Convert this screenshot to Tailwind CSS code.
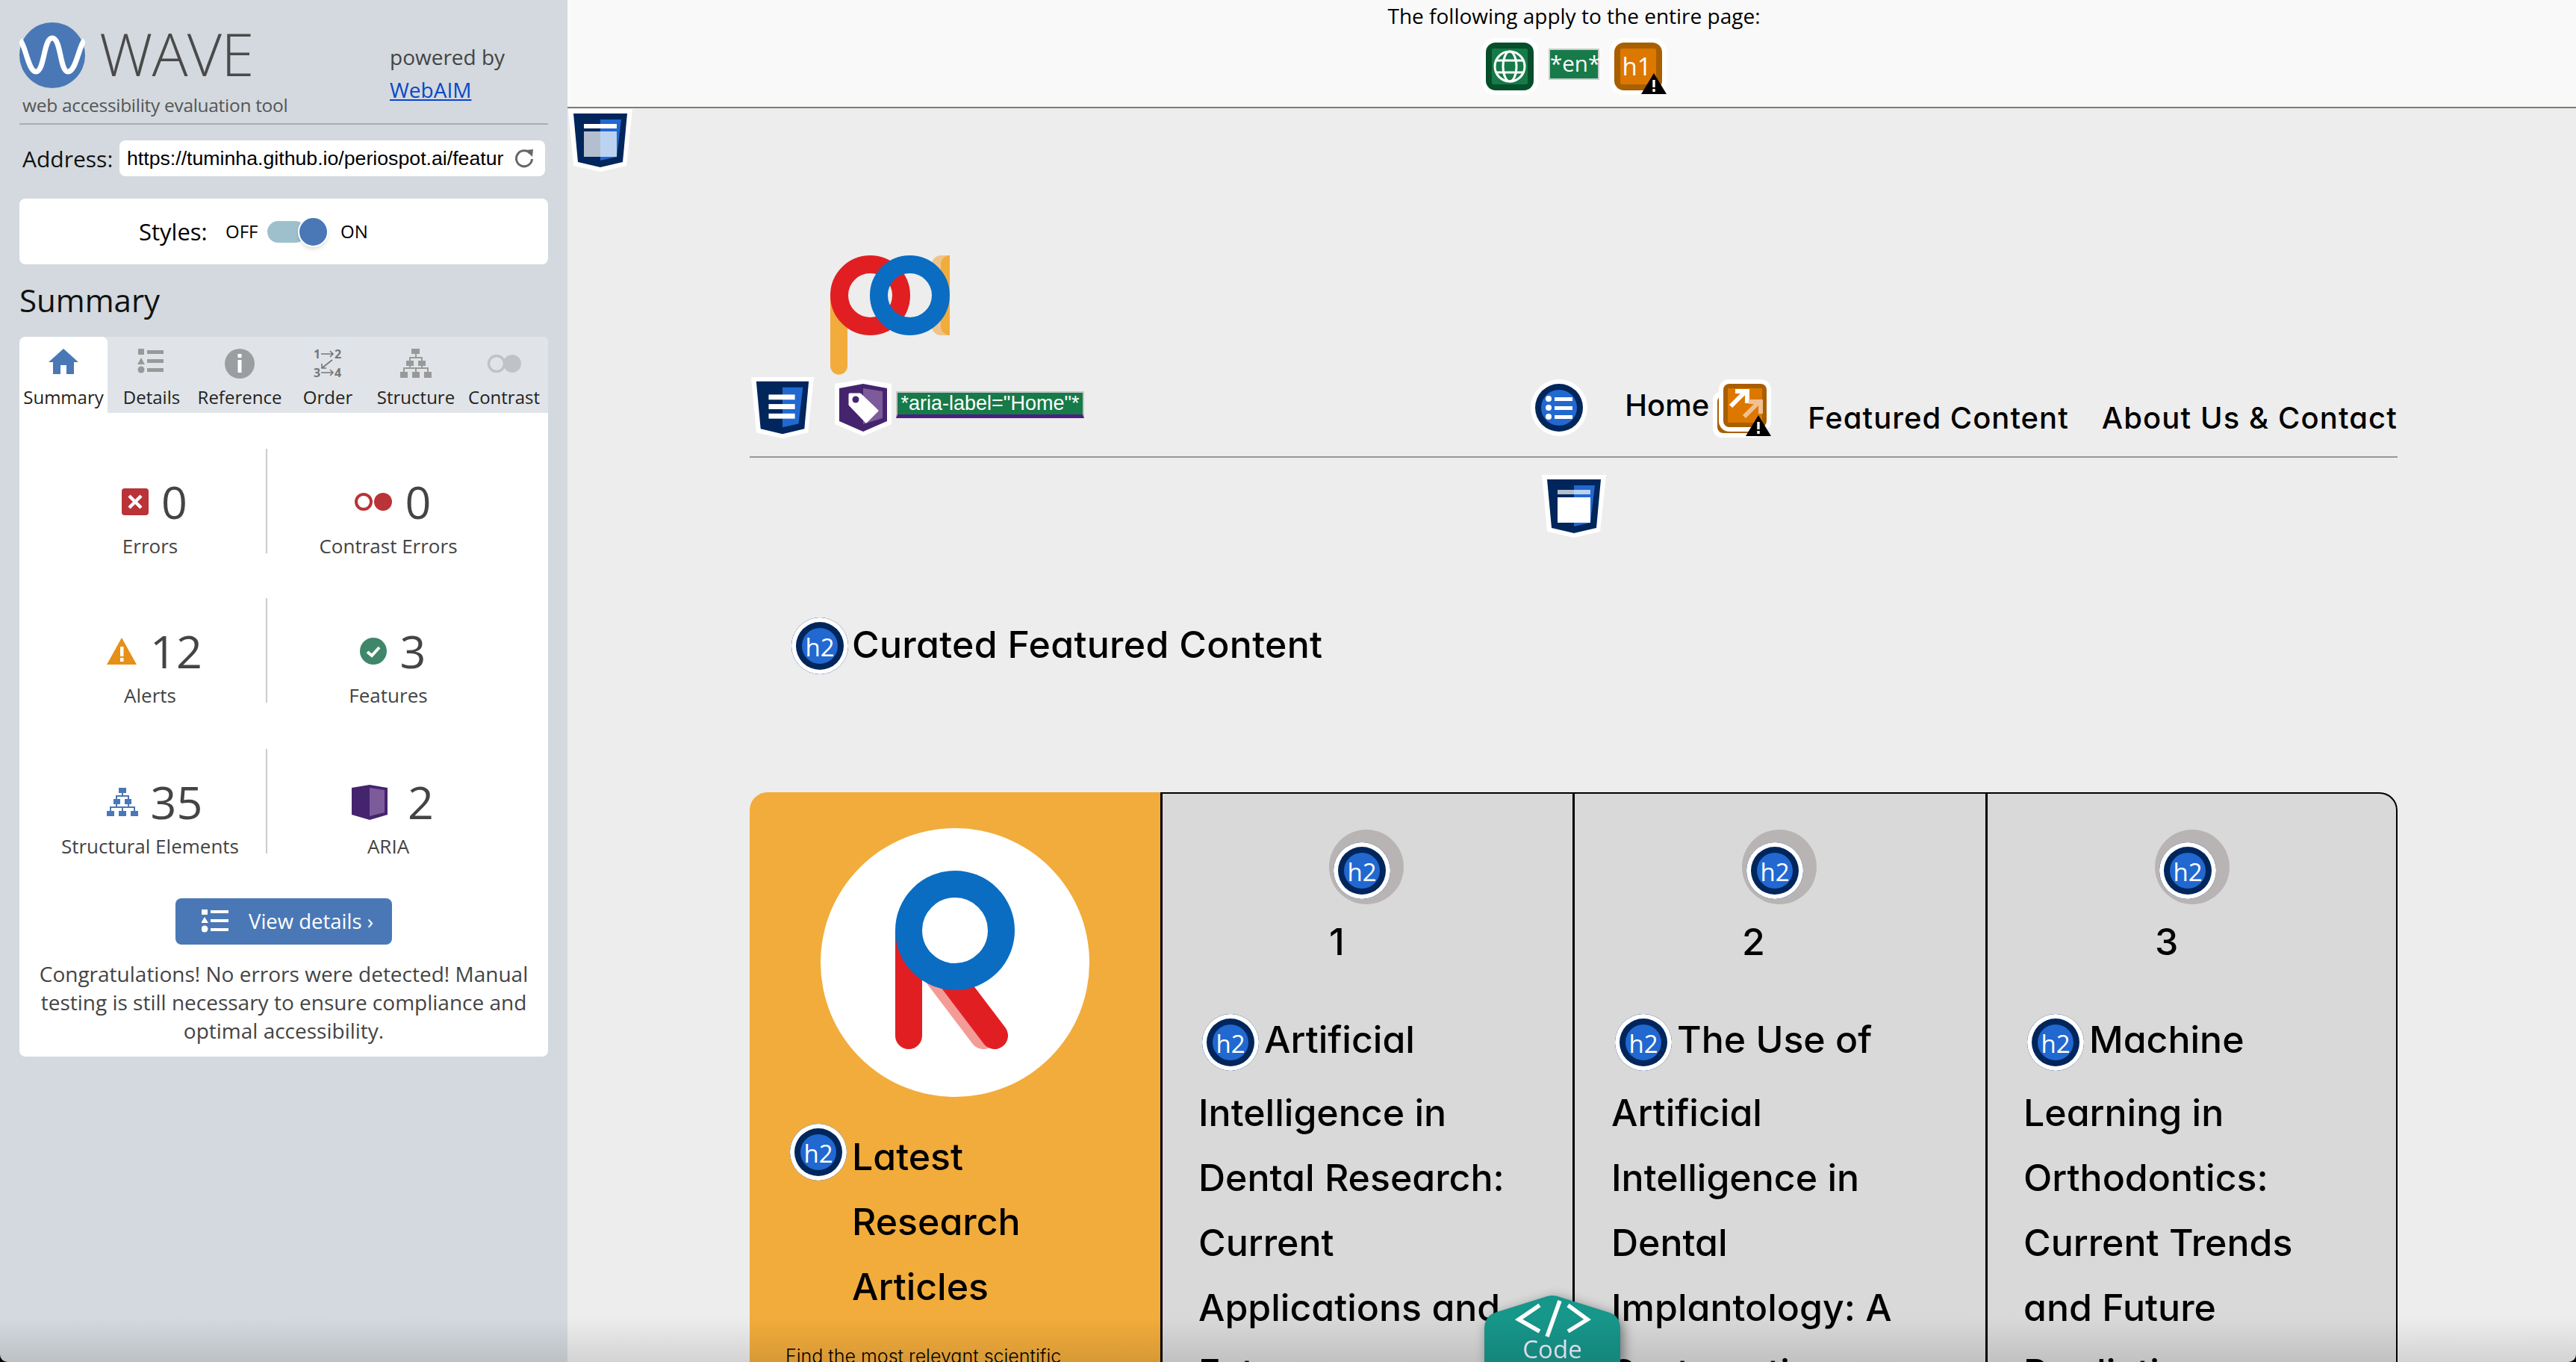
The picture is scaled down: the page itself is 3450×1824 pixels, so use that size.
<!DOCTYPE html>
<html lang="en">
<head>
    <meta charset="UTF-8">
    <meta name="viewport" content="width=device-width, initial-scale=1.0">
    <title>WAVE report</title>
    <script src="https://cdn.jsdelivr.net/npm/@tailwindcss/browser@4"></script>
</head>
<body class="bg-black w-[3450px] h-[1824px] overflow-hidden">
    <!-- shared icons -->
    <svg class="hidden">
        <symbol id="shield" viewBox="0 0 86 84">
            <polygon points="0,0 86,0 78,76 43,84 7,76" fill="#fff"/>
            <polygon points="7,6 79,6 73,71 43,78 13,71" fill="#01265c"/>
            <polygon points="43,14 71,14 65,64 43,69" fill="#2168d0"/>
        </symbol>
        <symbol id="warn" viewBox="0 0 34 28">
            <polygon points="17,0 34,28 0,28" fill="#000"/><rect x="15.3" y="9" width="3.4" height="10" fill="#fff"/><rect x="15.3" y="21" width="3.4" height="4" fill="#fff"/>
        </symbol>
    </svg>

    <div class="relative flex w-full h-full overflow-hidden rounded-b-[10px] font-['Open_Sans',sans-serif]">
        <!-- WAVE sidebar -->
        <aside class="w-[760px] h-full shrink-0 bg-[#d3d9de] px-[26px]">
            <div class="relative h-[167px] border-b-2 border-[#a9aeb2]">
                <div class="flex items-start pt-[30px]">
                    <svg class="w-[88px] h-[88px]" viewBox="0 0 88 88"><circle cx="44" cy="44" r="44" fill="#4a78b6"/><path d="M1 24C8 30 12 66 22 66C34 66 32 21 44 21C56 21 54 66 65 66C76 66 80 30 87 24" fill="none" stroke="#fff" stroke-width="7"/></svg>
                    <div class="ml-[19px] mt-[-3px] text-[80px] leading-[88px] font-light text-[#4a4a4a] tracking-[-0.8px]">WAVE</div>
                    <div class="absolute left-[496px] top-[54px] text-[28px] leading-[44px] text-[#444]">
                        <div>powered by</div>
                        <a class="text-[#0a48c8] underline">WebAIM</a>
                    </div>
                </div>
                <div class="ml-[4px] mt-[5px] text-[24.5px] leading-[36px] text-[#555] tracking-[-0.3px]">web accessibility evaluation tool</div>
            </div>

            <div class="flex items-center mt-[21px] pl-[4px]">
                <span class="text-[30px] text-[#111] w-[130px]">Address:</span>
                <div class="flex items-center justify-between w-[570px] h-[48px] rounded-lg bg-white pl-[10px] pr-[15px]">
                    <span class="font-['Liberation_Sans',sans-serif] text-[26.7px] text-black whitespace-nowrap">https://tuminha.github.io/periospot.ai/featur</span>
                    <svg class="w-[26px] h-[26px]" viewBox="0 0 26 26" fill="none"><path d="M21 6.5A10.5 10.5 0 1 0 23.5 14" stroke="#666" stroke-width="3"/><polygon points="15,2 25,1 24,11" fill="#666"/></svg>
                </div>
            </div>

            <div class="flex items-center mt-[30px] h-[88px] rounded-lg bg-white pl-[160px] text-black">
                <span class="text-[31px] w-[116px]">Styles:</span>
                <span class="text-[24px] w-[56px]">OFF</span>
                <div class="relative w-[82px] h-[29px]">
                    <div class="w-[52px] h-[29px] rounded-full bg-[#9dc0cc]"></div>
                    <div class="absolute left-[41px] top-[-6px] w-[41px] h-[41px] rounded-full bg-[#4a78b6] border-2 border-white shadow-md"></div>
                </div>
                <span class="text-[24px] ml-[16px]">ON</span>
            </div>

            <h2 class="mt-[18px] text-[42px] leading-[60px] text-[#111]">Summary</h2>

            <div class="mt-[19px] h-[964px] rounded-lg bg-white overflow-hidden">
                <!-- tabs -->
                <div class="grid grid-cols-6 h-[102px] bg-[#e0e4e8] text-[24px] text-[#222] text-center">
                    <div class="bg-white rounded-t-lg pt-[16px]">
                        <svg class="mx-auto w-[40px] h-[40px]" viewBox="0 0 40 40"><path d="M20 0L40 18H34V34H24V22H16V34H6V18H0Z" fill="#4a78b6"/></svg>
                        <div class="mt-[5px] leading-[40px]">Summary</div>
                    </div>
                    <div class="pt-[16px]">
                        <svg class="mx-auto w-[40px] h-[40px]" viewBox="0 0 40 40" fill="#999"><rect x="2" y="0" width="8" height="8"/><polygon points="6,12 11,21 1,21"/><circle cx="6" cy="28" r="4.5"/><rect x="14" y="2" width="22" height="5"/><rect x="14" y="14" width="22" height="5"/><rect x="14" y="26" width="22" height="5"/></svg>
                        <div class="mt-[5px] leading-[40px]">Details</div>
                    </div>
                    <div class="pt-[16px]">
                        <svg class="mx-auto w-[40px] h-[40px]" viewBox="0 0 40 40"><circle cx="20" cy="20" r="20" fill="#9a9ea0"/><rect x="17.5" y="7" width="5" height="5" fill="#fff"/><rect x="17.5" y="15" width="5" height="17" fill="#fff"/></svg>
                        <div class="mt-[5px] leading-[40px]">Reference</div>
                    </div>
                    <div class="pt-[16px]">
                        <svg class="mx-auto w-[40px] h-[40px]" viewBox="0 0 40 40" fill="none" stroke="#777" stroke-width="1.6">
                            <text x="1" y="13" font-family="Open Sans" font-weight="700" font-size="16" fill="#777" stroke="none">1</text><text x="29" y="13" font-family="Open Sans" font-weight="700" font-size="16" fill="#777" stroke="none">2</text>
                            <text x="1" y="38" font-family="Open Sans" font-weight="700" font-size="16" fill="#777" stroke="none">3</text><text x="29" y="38" font-family="Open Sans" font-weight="700" font-size="16" fill="#777" stroke="none">4</text>
                            <path d="M11 7H27M23 3L27 7L23 11M11 32H27M23 28L27 32L23 36M26 15L12 26M12 20V26H18"/>
                        </svg>
                        <div class="mt-[5px] leading-[40px]">Order</div>
                    </div>
                    <div class="pt-[16px]">
                        <svg class="mx-auto w-[42px] h-[40px]" viewBox="0 0 42 40"><g fill="#999"><rect x="15" y="0" width="11" height="7"/><rect x="8" y="16" width="10" height="7"/><rect x="24" y="16" width="10" height="7"/><rect x="0" y="31" width="10" height="8"/><rect x="16" y="31" width="10" height="8"/><rect x="32" y="31" width="10" height="8"/></g><path d="M21 7V12M13 16V12H29V16M21 26H5V31M21 26V31M21 26H37V31M13 23V26M29 23V26" stroke="#999" stroke-width="2" fill="none"/></svg>
                        <div class="mt-[5px] leading-[40px]">Structure</div>
                    </div>
                    <div class="pt-[16px]">
                        <svg class="mx-auto w-[50px] h-[40px]" viewBox="0 0 50 40"><circle cx="15" cy="20" r="10.5" fill="none" stroke="#c0c3c6" stroke-width="3.5"/><circle cx="36" cy="20" r="12" fill="#c0c3c6"/></svg>
                        <div class="mt-[5px] leading-[40px]">Contrast</div>
                    </div>
                </div>

                <!-- counts -->
                <div class="mt-[48px] text-[#444]">
                    <div class="flex h-[140px]">
                        <div class="w-[332px] pl-[20px] pt-[35px] text-center border-r-2 border-[#ccc]">
                            <div class="flex items-center justify-center gap-[17px] h-[72px] pl-[12px] text-[61px]">
                                <svg class="w-[36px] h-[36px]" viewBox="0 0 36 36"><rect width="36" height="36" rx="4" fill="#b93338"/><path d="M10 10L26 26M26 10L10 26" stroke="#fff" stroke-width="4.5"/></svg>
                                <span>0</span>
                            </div>
                            <div class="mt-[5px] text-[26px] leading-[36px]">Errors</div>
                        </div>
                        <div class="w-[324px] pt-[35px] text-center">
                            <div class="flex items-center justify-center gap-[18px] h-[72px] pl-[12px] text-[61px]">
                                <svg class="w-[50px] h-[24px]" viewBox="0 0 50 24"><circle cx="12" cy="12" r="10" fill="none" stroke="#b93338" stroke-width="4"/><circle cx="38" cy="12" r="12" fill="#b93338"/></svg>
                                <span>0</span>
                            </div>
                            <div class="mt-[5px] text-[26px] leading-[36px]">Contrast Errors</div>
                        </div>
                    </div>
                    <div class="flex h-[140px] mt-[60px]">
                        <div class="w-[332px] pl-[20px] pt-[35px] text-center border-r-2 border-[#ccc]">
                            <div class="flex items-center justify-center gap-[18px] h-[72px] pl-[12px] text-[61px]">
                                <svg class="w-[40px] h-[36px]" viewBox="0 0 40 36"><polygon points="20,0 40,36 0,36" fill="#e69017"/><rect x="18" y="12" width="4.5" height="13" fill="#fff"/><rect x="18" y="27" width="4.5" height="5" fill="#fff"/></svg>
                                <span>12</span>
                            </div>
                            <div class="mt-[5px] text-[26px] leading-[36px]">Alerts</div>
                        </div>
                        <div class="w-[324px] pt-[35px] text-center">
                            <div class="flex items-center justify-center gap-[18px] h-[72px] pl-[12px] text-[61px]">
                                <svg class="w-[36px] h-[36px]" viewBox="0 0 36 36"><circle cx="18" cy="18" r="18" fill="#40866a"/><path d="M10 19L16 24L26 13" fill="none" stroke="#fff" stroke-width="4"/></svg>
                                <span>3</span>
                            </div>
                            <div class="mt-[5px] text-[26px] leading-[36px]">Features</div>
                        </div>
                    </div>
                    <div class="flex h-[140px] mt-[62px]">
                        <div class="w-[332px] pl-[20px] pt-[35px] text-center border-r-2 border-[#ccc]">
                            <div class="flex items-center justify-center gap-[17px] h-[72px] pl-[12px] text-[61px]">
                                <svg class="w-[42px] h-[38px]" viewBox="0 0 42 38"><g fill="#4a78b6"><rect x="16" y="0" width="10" height="7"/><rect x="9" y="15" width="9" height="7"/><rect x="24" y="15" width="9" height="7"/><rect x="0" y="31" width="10" height="7"/><rect x="16" y="31" width="10" height="7"/><rect x="32" y="31" width="10" height="7"/></g><path d="M21 7V11M13 15V11H29V15M13 22V26M29 22V26M5 31V26H37V31M21 26V31" stroke="#4a78b6" stroke-width="2" fill="none"/></svg>
                                <span>35</span>
                            </div>
                            <div class="mt-[5px] text-[26px] leading-[36px]">Structural Elements</div>
                        </div>
                        <div class="w-[324px] pt-[35px] text-center">
                            <div class="flex items-center justify-center gap-[27px] h-[72px] pl-[12px] text-[61px]">
                                <svg class="w-[48px] h-[47px]" viewBox="0 0 48 47"><polygon points="0,4 24,0 48,4 48,40 24,47 0,40" fill="#45246e"/><polygon points="24,4 44,7 44,37 24,42" fill="#7d5b9b"/></svg>
                                <span>2</span>
                            </div>
                            <div class="mt-[5px] text-[26px] leading-[36px]">ARIA</div>
                        </div>
                    </div>
                </div>

                <div class="flex items-center w-[290px] h-[62px] mx-auto mt-[60px] rounded-lg bg-[#4a78b6] pl-[35px] text-white text-[27.5px]">
                    <svg class="w-[36px] h-[32px]" viewBox="0 0 36 32" fill="#fff"><rect x="0" y="0" width="8" height="7"/><polygon points="4,10 9,18 -1,18"/><circle cx="4" cy="26" r="4.5"/><rect x="12" y="1" width="24" height="4"/><rect x="12" y="13" width="24" height="4"/><rect x="12" y="25" width="24" height="4"/></svg>
                    <span class="ml-[27px]">View details ›</span>
                </div>
                <p class="mt-[20px] px-[20px] text-center text-[28px] leading-[38px] text-[#444]">Congratulations! No errors were detected! Manual testing is still necessary to ensure compliance and optimal accessibility.</p>
            </div>
        </aside>

        <!-- page under test -->
        <main class="flex-1 min-w-0 h-full bg-[#ededed] text-black font-['Inter',sans-serif] [font-feature-settings:'cv11']">
            <div class="h-[145px] bg-[#f9f9f9] border-b-2 border-[#7a8070] pl-[6px] font-['Open_Sans',sans-serif] [font-feature-settings:normal] text-center">
                <div class="text-[28px] leading-[42px]">The following apply to the entire page:</div>
                <div class="flex justify-center items-start gap-[14px] mt-[9px]">
                    <svg class="w-[76px] h-[76px]" viewBox="0 0 76 76">
                        <rect width="76" height="76" rx="18" fill="#fff"/><rect x="6" y="6" width="64" height="64" rx="13" fill="#054f2a"/><rect x="14" y="14" width="48" height="48" rx="2" fill="#177a49"/>
                        <g fill="none" stroke="#fff" stroke-width="3"><circle cx="38" cy="38" r="20"/><ellipse cx="38" cy="38" rx="9" ry="20"/><path d="M20 30H56M20 46H56"/></g>
                    </svg>
                    <div class="mt-[14px] w-[68px] h-[42px] border-2 border-[#ccc] bg-[#177a49] text-white text-[29.5px] leading-[36px]">*en*</div>
                    <div class="relative w-[76px] h-[76px]">
                        <svg class="w-[76px] h-[76px]" viewBox="0 0 76 76">
                            <rect width="76" height="76" rx="18" fill="#fff"/><rect x="6" y="6" width="64" height="64" rx="13" fill="#a85f00"/><rect x="14" y="14" width="48" height="48" rx="2" fill="#dc7700"/>
                            <text x="36" y="50" text-anchor="middle" font-family="Open Sans" font-size="33" fill="#fff">h1</text>
                        </svg>
                        <svg class="absolute left-[42px] top-[47px] w-[34px] h-[28px]"><use href="#warn"/></svg>
                    </div>
                </div>
            </div>

            <svg class="ml-[1px] mt-[1px] w-[86px] h-[84px]" viewBox="0 0 86 84">
                <use href="#shield"/><rect x="21" y="20" width="44" height="6" fill="#fff"/><rect x="21" y="30" width="44" height="34" fill="#fff" opacity=".7"/>
            </svg>

            <div class="ml-[244px] w-[2207px]">
                <!-- logo -->
                <svg class="ml-[108px] mt-[112px] w-[160px] h-[160px]" viewBox="0 0 160 160">
                    <path d="M160 0V107H148A12 12 0 0 1 136 95V12A12 12 0 0 1 148 0Z" fill="#eec48c"/>
                    <path d="M160 0V107A12 12 0 0 1 148 95V12A12 12 0 0 1 160 0Z" fill="#f2ac3b"/>
                    <path d="M0 50H23V148A11.5 11.5 0 0 1 0 148Z" fill="#f2ac3b"/>
                    <circle cx="53.5" cy="53.5" r="41.5" fill="none" stroke="#e11f22" stroke-width="24"/>
                    <circle cx="106.5" cy="53.5" r="41.5" fill="none" stroke="#0a6dc2" stroke-width="24"/>
                </svg>

                <!-- nav -->
                <div class="flex items-start h-[109px] mt-[2px] border-b-2 border-[#999] pl-[2px]">
                    <svg class="w-[84px] h-[84px]" viewBox="0 0 86 84">
                        <use href="#shield"/><rect x="24" y="24" width="36" height="7" fill="#fff"/><rect x="24" y="37" width="36" height="7" fill="#fff"/><rect x="24" y="50" width="36" height="7" fill="#fff"/>
                    </svg>
                    <svg class="ml-[28px] mt-[4px] w-[76px] h-[76px]" viewBox="0 0 76 76">
                        <polygon points="0,6 38,0 76,6 76,60 38,76 0,60" fill="#fff"/><polygon points="6,12 38,6 70,12 70,56 38,70 6,56" fill="#45246e"/><polygon points="38,12 64,16 64,52 38,60" fill="#7d5b9b"/>
                        <path d="M20 20H34L57 42L42 57L20 34Z" fill="#fff" stroke="#fff" stroke-width="3" stroke-linejoin="round"/><circle cx="28" cy="27" r="4.5" fill="#45246e"/>
                    </svg>
                    <div class="ml-[6px] mt-[20px] w-[252px] h-[36px] border-2 border-[#c4c4c4] border-b-[5px] border-b-[#4a1f82] bg-[#177a49] text-white text-center font-['Liberation_Sans',sans-serif] text-[27px] leading-[28px] [font-feature-settings:normal] whitespace-nowrap">*aria-label="Home"*</div>

                    <nav class="flex items-start ml-auto text-[40px] leading-[48px] font-medium whitespace-nowrap">
                        <svg class="mt-[4px] w-[76px] h-[76px]" viewBox="0 0 76 76">
                            <circle cx="38" cy="38" r="38" fill="#fff"/><circle cx="38" cy="38" r="32" fill="#01265c"/><circle cx="38" cy="38" r="24" fill="#2168d0"/>
                            <g fill="#fff"><circle cx="24" cy="26" r="4"/><circle cx="24" cy="38" r="4"/><circle cx="24" cy="50" r="4"/><rect x="32" y="24" width="24" height="5"/><rect x="32" y="36" width="24" height="5"/><rect x="32" y="48" width="24" height="5"/></g>
                        </svg>
                        <a class="ml-[50px] mt-[15px]">Home</a>
                        <div class="relative ml-[5px] mt-[4px] w-[78px] h-[78px]">
                            <svg class="w-[78px] h-[78px]" viewBox="0 0 78 78">
                                <rect x="0" y="16" width="66" height="62" rx="12" fill="#fff"/><rect x="6" y="22" width="54" height="50" rx="8" fill="#a85f00"/><rect x="8" y="0" width="70" height="70" rx="14" fill="#fff"/>
                                <rect x="14" y="6" width="58" height="58" rx="8" fill="#a85f00"/><rect x="20" y="12" width="46" height="46" fill="#dc7700"/>
                                <path d="M24 36L44 16M30 16H46V32" fill="none" stroke="#fff" stroke-width="6"/><path d="M42 50L62 30M48 30H64V46" fill="none" stroke="#f2bf93" stroke-width="6"/>
                            </svg>
                            <svg class="absolute left-[44px] top-[48px] w-[34px] h-[28px]"><use href="#warn"/></svg>
                        </div>
                        <a class="ml-[49px] mt-[32px] tracking-[1px]">Featured Content</a>
                        <a class="ml-[44px] mt-[32px] tracking-[1.1px]">About Us &amp; Contact</a>
                    </nav>
                </div>

                <svg class="ml-[1061px] mt-[23px] w-[86px] h-[84px]" viewBox="0 0 86 84">
                    <use href="#shield"/><rect x="21" y="20" width="44" height="6" fill="#fff" opacity=".7"/><rect x="21" y="30" width="44" height="34" fill="#fff"/>
                </svg>

                <h2 class="flex items-center h-[78px] ml-[56px] mt-[106px] text-[50px] leading-[78px] font-medium whitespace-nowrap">
                    <span class="w-[76px] h-[76px] mr-[5px] rounded-full bg-[#2168d0] shadow-[inset_0_0_0_6px_#fff,inset_0_0_0_14px_#01265c] text-white text-center font-['Open_Sans',sans-serif] font-normal text-[33px] leading-[80px] [font-feature-settings:normal]">h2</span>
                    <span class="mb-[4px] tracking-[0.3px]">Curated Featured Content</span>
                </h2>

                <!-- featured grid -->
                <div class="flex mt-[157px] text-[50px] leading-[87px] font-medium">
                    <div class="w-[550px] h-[900px] bg-[#f2ac3b] rounded-tl-[24px] pt-[48px]">
                        <div class="flex items-center justify-center ml-[95px] w-[360px] h-[360px] rounded-full bg-white">
                            <svg class="mb-[6px] w-[160px] h-[240px]" viewBox="0 0 160 240">
                                <path d="M0 80H36V221A18 18 0 0 1 0 221Z" fill="#e11f22"/>
                                <path d="M58 142L118 221" stroke="#f49b98" stroke-width="36" stroke-linecap="round" fill="none"/>
                                <path d="M73 142L133 221" stroke="#e11f22" stroke-width="36" stroke-linecap="round" fill="none"/>
                                <circle cx="80" cy="80" r="62" fill="none" stroke="#0a6dc2" stroke-width="36"/>
                            </svg>
                        </div>
                        <div class="flex items-start ml-[54px] mt-[36px]">
                            <span class="shrink-0 w-[76px] h-[76px] mr-[7px] rounded-full bg-[#2168d0] shadow-[inset_0_0_0_6px_#fff,inset_0_0_0_14px_#01265c] text-white text-center font-['Open_Sans',sans-serif] font-normal text-[33px] leading-[80px] [font-feature-settings:normal]">h2</span>
                            <div class="pt-[1px]">Latest<br>Research<br>Articles</div>
                        </div>
                        <p class="ml-[48px] mt-[29px] text-[25px] leading-[40px] font-light whitespace-nowrap">Find the most relevant scientific</p>
                    </div>

                    <div class="w-[552px] h-[900px] bg-[#d9d9d9] border-l-[3px] border-t-2 border-black">
                        <div class="relative ml-[223px] mt-[48px] w-[100px] h-[100px] rounded-full bg-[#b9b4b4]">
                            <span class="absolute left-[6px] top-[17px] w-[76px] h-[76px] rounded-full bg-[#2168d0] shadow-[inset_0_0_0_6px_#fff,inset_0_0_0_14px_#01265c] text-white text-center font-['Open_Sans',sans-serif] font-normal text-[33px] leading-[80px] [font-feature-settings:normal]">h2</span>
                        </div>
                        <div class="ml-[223px] mt-[20px] leading-[60px]">1</div>
                        <h3 class="ml-[48px] mt-[58px]">
                            <span class="block h-[98px]"><span class="inline-block align-middle w-[76px] h-[76px] ml-[5px] mr-[7px] rounded-full bg-[#2168d0] shadow-[inset_0_0_0_6px_#fff,inset_0_0_0_14px_#01265c] text-white text-center font-['Open_Sans',sans-serif] font-normal text-[33px] leading-[80px] [font-feature-settings:normal]">h2</span>Artificial</span>
                            Intelligence in<br>Dental Research:<br>Current<br>Applications and<br>Future
                        </h3>
                    </div>
                    <div class="w-[553px] h-[900px] bg-[#d9d9d9] border-l-[3px] border-t-2 border-black">
                        <div class="relative ml-[224px] mt-[48px] w-[100px] h-[100px] rounded-full bg-[#b9b4b4]">
                            <span class="absolute left-[6px] top-[17px] w-[76px] h-[76px] rounded-full bg-[#2168d0] shadow-[inset_0_0_0_6px_#fff,inset_0_0_0_14px_#01265c] text-white text-center font-['Open_Sans',sans-serif] font-normal text-[33px] leading-[80px] [font-feature-settings:normal]">h2</span>
                        </div>
                        <div class="ml-[224px] mt-[20px] leading-[60px]">2</div>
                        <h3 class="ml-[49px] mt-[58px]">
                            <span class="block h-[98px]"><span class="inline-block align-middle w-[76px] h-[76px] ml-[5px] mr-[7px] rounded-full bg-[#2168d0] shadow-[inset_0_0_0_6px_#fff,inset_0_0_0_14px_#01265c] text-white text-center font-['Open_Sans',sans-serif] font-normal text-[33px] leading-[80px] [font-feature-settings:normal]">h2</span>The Use of</span>
                            Artificial<br>Intelligence in<br>Dental<br>Implantology: A<br>Systematic
                        </h3>
                    </div>
                    <div class="w-[552px] h-[900px] bg-[#d9d9d9] border-l-[3px] border-r-2 border-t-2 border-black rounded-tr-[24px]">
                        <div class="relative ml-[224px] mt-[48px] w-[100px] h-[100px] rounded-full bg-[#b9b4b4]">
                            <span class="absolute left-[6px] top-[17px] w-[76px] h-[76px] rounded-full bg-[#2168d0] shadow-[inset_0_0_0_6px_#fff,inset_0_0_0_14px_#01265c] text-white text-center font-['Open_Sans',sans-serif] font-normal text-[33px] leading-[80px] [font-feature-settings:normal]">h2</span>
                        </div>
                        <div class="ml-[224px] mt-[20px] leading-[60px]">3</div>
                        <h3 class="ml-[48px] mt-[58px]">
                            <span class="block h-[98px]"><span class="inline-block align-middle w-[76px] h-[76px] ml-[5px] mr-[7px] rounded-full bg-[#2168d0] shadow-[inset_0_0_0_6px_#fff,inset_0_0_0_14px_#01265c] text-white text-center font-['Open_Sans',sans-serif] font-normal text-[33px] leading-[80px] [font-feature-settings:normal]">h2</span>Machine</span>
                            Learning in<br>Orthodontics:<br>Current Trends<br>and Future<br>Prediction
                        </h3>
                    </div>
                </div>
            </div>
        </main>

        <!-- code panel tab -->
        <div class="absolute left-[1988px] top-[1735px] w-[182px] h-[89px] drop-shadow-[4px_4px_8px_rgba(0,0,0,0.45)]">
            <svg class="absolute inset-0 w-[182px] h-[89px]" viewBox="0 0 182 89">
                <path d="M0 45Q0 28 14 23L84 1Q91 -1 98 1L168 23Q182 28 182 45V89H0Z" fill="#17968a"/>
                <path d="M74 13L46 32L74 48M112 13L138 32L112 48" fill="none" stroke="#fff" stroke-width="5.5"/>
                <path d="M101 7L84 55" fill="none" stroke="#fff" stroke-width="5.5"/>
            </svg>
            <div class="absolute left-0 right-0 top-[50px] text-center font-['Open_Sans',sans-serif] text-[33px] leading-[44px] text-[#eef]">Code</div>
        </div>

        <!-- window bottom shadow -->
        <div class="absolute left-0 right-0 bottom-0 h-[60px] bg-linear-to-t from-black/11 to-transparent pointer-events-none"></div>
    </div>
</body>
</html>
